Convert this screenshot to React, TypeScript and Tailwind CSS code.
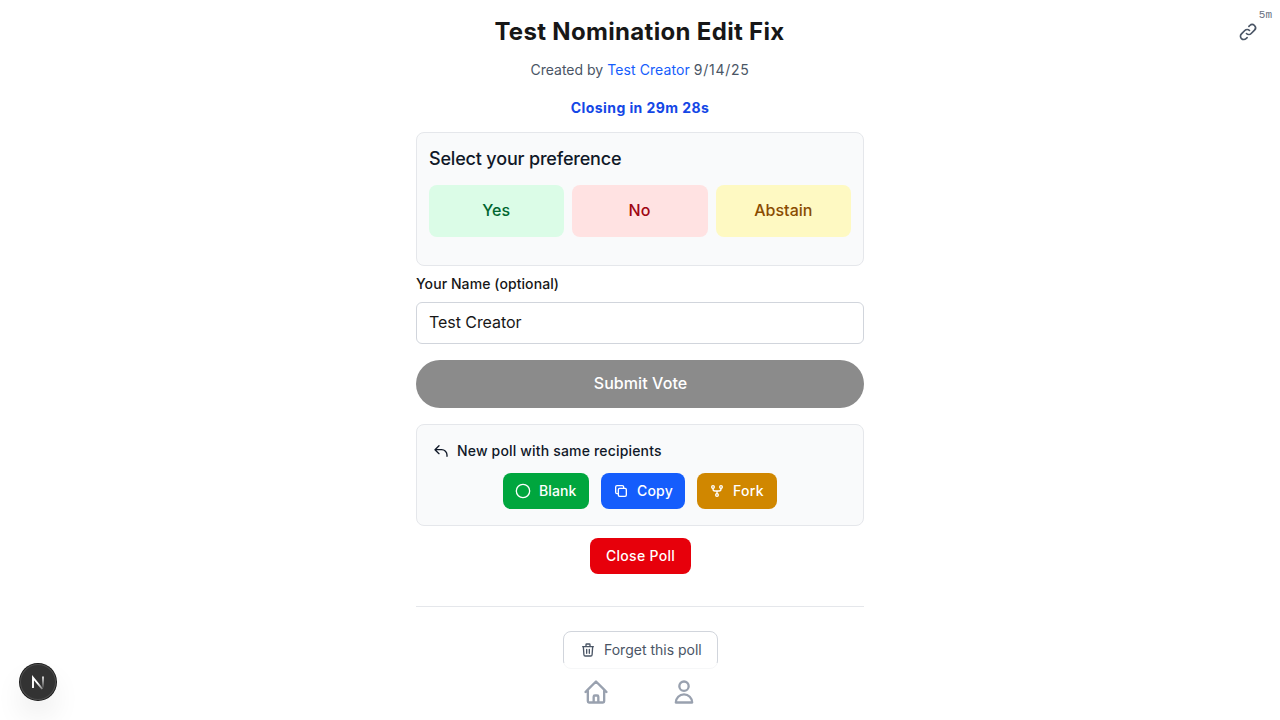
import React from "react";

function Txt({ children, className = "" }: { children: React.ReactNode; className?: string }) {
  return <span className={`whitespace-nowrap ${className}`}>{children}</span>;
}

const stroke = {
  fill: "none",
  stroke: "currentColor",
  strokeWidth: 2,
  strokeLinecap: "round" as const,
  strokeLinejoin: "round" as const,
  viewBox: "0 0 24 24",
};

export default function App() {
  return (
    <div className="relative h-[720px] w-full overflow-hidden bg-white font-['Inter','Liberation_Sans',sans-serif] text-[#171717]">
      <div className="absolute right-2 top-2 font-['Liberation_Mono',monospace] text-[11px] leading-[14px] text-gray-500">5m</div>
      <button className="absolute left-[1238px] top-[22px] text-gray-600" aria-label="Copy link">
        <svg {...stroke} className="size-5">
          <path d="M13.828 10.172a4 4 0 00-5.656 0l-4 4a4 4 0 105.656 5.656l1.102-1.101m-.758-4.899a4 4 0 005.656 0l4-4a4 4 0 00-5.656-5.656l-1.1 1.1" />
        </svg>
      </button>

      <main className="mx-auto flex w-[448px] flex-col">
        <h1 className="mt-4 pr-px text-center text-2xl leading-8 font-bold tracking-[0.32px]"><Txt>Test Nomination Edit Fix</Txt></h1>
        <p className="mt-3 text-center text-sm text-gray-600">
          <Txt>Created by <span className="tracking-[0.1px] text-[#155dfc]">Test Creator</span> <span className="tracking-[0.73px]">9/14/25</span></Txt>
        </p>
        <p className="mt-[18px] text-center text-sm font-bold tracking-[0.42px] text-[#1447e6]"><Txt>Closing in 29m 28s</Txt></p>

        <section className="mt-[14px] h-[134px] rounded-lg border border-gray-200 bg-gray-50 px-3 pt-3">
          <h2 className="text-lg leading-7 font-medium tracking-[-0.18px] text-gray-900"><Txt>Select your preference</Txt></h2>
          <div className="mt-3 grid grid-cols-3 gap-2 text-base font-medium">
            <button className="h-[52px] rounded-lg bg-green-100 pr-px pb-0.5 text-green-800">Yes</button>
            <button className="h-[52px] rounded-lg bg-red-100 pr-px pb-0.5 text-red-800">No</button>
            <button className="h-[52px] rounded-lg bg-yellow-100 pb-0.5 text-yellow-800">Abstain</button>
          </div>
        </section>

        <label className="mt-2 text-sm font-medium tracking-[0.08px]"><Txt>Your Name (optional)</Txt></label>
        <div className="mt-2 flex h-[42px] items-center rounded-md border border-gray-300 px-3 pb-0.5 text-base tracking-[-0.06px]"><Txt>Test Creator</Txt></div>
        <button className="mt-4 h-12 rounded-full bg-[#8b8b8b] pb-0.5 pl-px text-base font-medium tracking-[0.08px] text-white"><Txt>Submit Vote</Txt></button>

        <section className="mt-4 h-[102px] rounded-lg border border-gray-200 bg-gray-50 p-4">
          <div className="flex h-5 items-center gap-2 text-sm font-medium tracking-[0.17px] text-gray-900">
            <svg {...stroke} className="size-4"><path d="M3 10h10a8 8 0 018 8v2M3 10l6 6m-6-6l6-6" /></svg>
            <Txt>New poll with same recipients</Txt>
          </div>
          <div className="mt-3 flex justify-center gap-3 text-sm font-medium tracking-[0.1px] text-white">
            <button className="flex h-9 w-[86px] items-center gap-2 rounded-lg bg-green-600 px-3">
              <svg {...stroke} className="size-4"><circle cx="12" cy="12" r="10" /></svg><Txt>Blank</Txt>
            </button>
            <button className="flex h-9 w-[84px] items-center gap-2 rounded-lg bg-blue-600 px-3">
              <svg {...stroke} className="size-4"><path d="M8 16H6a2 2 0 01-2-2V6a2 2 0 012-2h8a2 2 0 012 2v2m-6 12h8a2 2 0 002-2v-8a2 2 0 00-2-2h-8a2 2 0 00-2 2v8a2 2 0 002 2z" /></svg><Txt className="tracking-[0.2px]">Copy</Txt>
            </button>
            <button className="flex h-9 w-20 items-center gap-2 rounded-lg bg-yellow-600 px-3">
              <svg {...stroke} className="size-4"><circle cx="6" cy="6" r="2" /><circle cx="18" cy="6" r="2" /><circle cx="12" cy="18" r="2" /><path d="M6 8v1a3 3 0 003 3h6a3 3 0 003-3V8M12 12v4" /></svg><Txt className="tracking-[0.3px]">Fork</Txt>
            </button>
          </div>
        </section>

        <button className="mx-auto mt-3 h-9 w-[101px] rounded-lg bg-[#e7000b] pl-px text-sm font-medium tracking-[0.3px] text-white"><Txt>Close Poll</Txt></button>
        <div className="mt-8 flex justify-center border-t border-gray-200 pt-6">
          <button className="flex h-[38px] w-[155px] items-center gap-2 rounded-lg border border-gray-300 pl-[16.5px] text-sm text-gray-600">
            <svg {...stroke} className="size-4"><path d="M19 7l-.867 12.142A2 2 0 0116.138 21H7.862a2 2 0 01-1.995-1.858L5 7m5 4v6m4-6v6m1-10V4a1 1 0 00-1-1h-4a1 1 0 00-1 1v3M4 7h16" /></svg><Txt>Forget this poll</Txt>
          </button>
        </div>
      </main>

      <nav className="absolute inset-x-0 bottom-0 flex h-[57px] justify-center gap-15 bg-white/80 pt-[15px] text-[#99a1af]">
        <svg {...stroke} className="size-7"><path d="M3 12l2-2m0 0l7-7 7 7M5 10v10a1 1 0 001 1h3m10-11l2 2m-2-2v10a1 1 0 01-1 1h-3m-6 0a1 1 0 001-1v-4a1 1 0 011-1h2a1 1 0 011 1v4a1 1 0 001 1m-6 0h6" /></svg>
        <svg {...stroke} className="size-7"><path d="M16 7a4 4 0 11-8 0 4 4 0 018 0zM12 14a7 7 0 00-7 7h14a7 7 0 00-7-7z" /></svg>
      </nav>
      <div className="absolute left-5 top-[664px] flex size-9 items-center justify-center rounded-full bg-[#333] shadow-[0_0_0_1px_#171717,inset_0_0_0_1px_#4d4d4d,0_16px_32px_-8px_#0000003d]">
        <svg viewBox="0 0 36 36" className="size-9" fill="none">
          <defs>
            <linearGradient id="diag" gradientUnits="userSpaceOnUse" x1="18" y1="19" x2="24" y2="26"><stop stopColor="#fff" /><stop offset="1" stopColor="#fff" stopOpacity="0.2" /></linearGradient>
            <linearGradient id="stem" gradientUnits="userSpaceOnUse" x1="22" y1="12" x2="22" y2="25"><stop stopColor="#fff" /><stop offset="1" stopColor="#fff" stopOpacity="0" /></linearGradient>
          </defs>
          <path d="M13 24V13.6L22.3 25" stroke="url(#diag)" strokeWidth="1.9" />
          <path d="M23 12.4v11.4" stroke="url(#stem)" strokeWidth="1.7" />
        </svg>
      </div>
    </div>
  );
}
